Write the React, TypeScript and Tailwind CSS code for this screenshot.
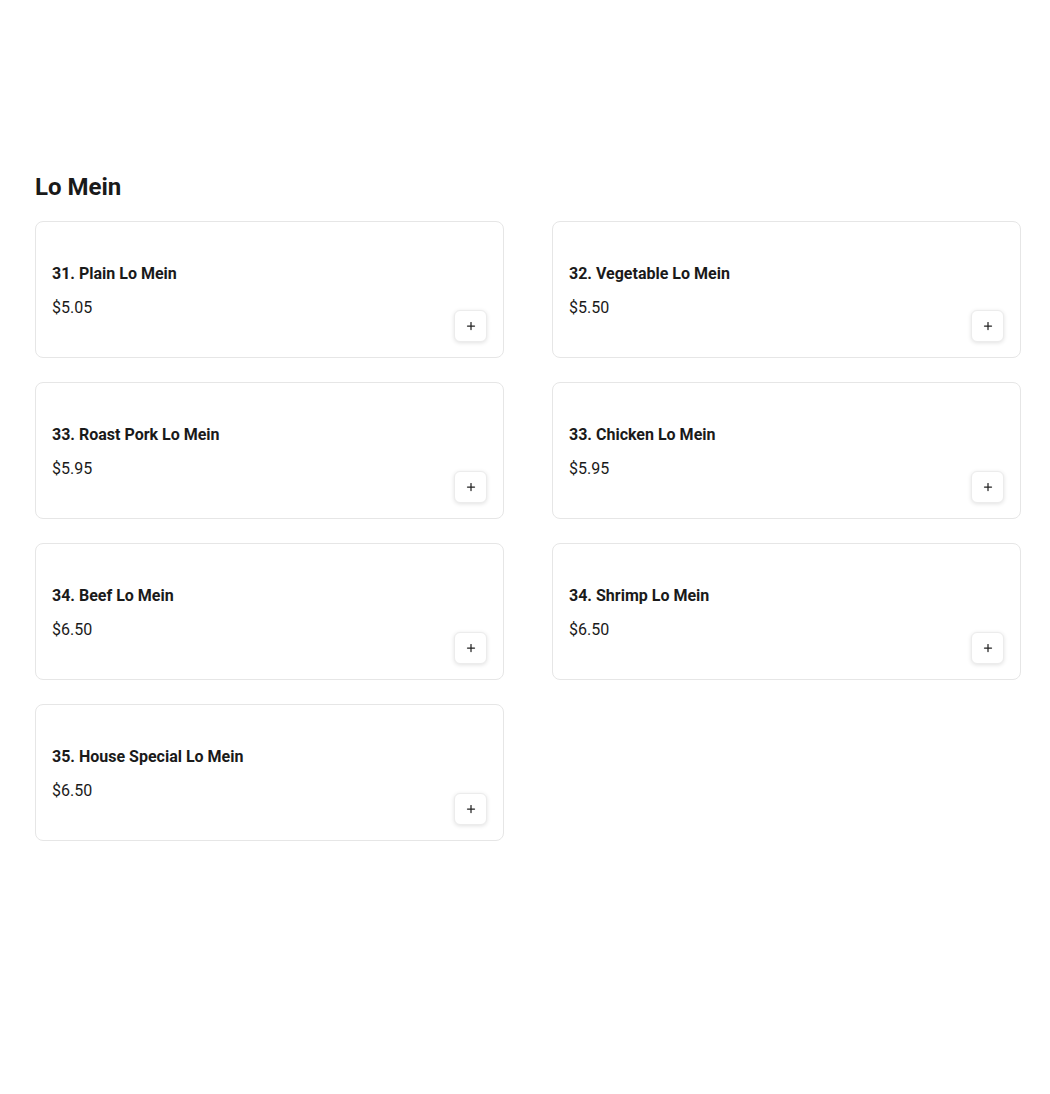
import { Plus } from 'lucide-react'

interface Item {
  name: string
  price: string
}

const items: Item[] = [
  { name: '31. Plain Lo Mein', price: '$5.05' },
  { name: '32. Vegetable Lo Mein', price: '$5.50' },
  { name: '33. Roast Pork Lo Mein', price: '$5.95' },
  { name: '33. Chicken Lo Mein', price: '$5.95' },
  { name: '34. Beef Lo Mein', price: '$6.50' },
  { name: '34. Shrimp Lo Mein', price: '$6.50' },
  { name: '35. House Special Lo Mein', price: '$6.50' },
]

export default function App() {
  return (
    <div className="min-h-screen bg-white font-['Roboto',sans-serif] text-[#1a1a1a]">
      <div className="ml-[35px] w-[986px] pt-[171px] pb-16">
        <h2 className="text-2xl font-bold leading-8">Lo Mein</h2>
        <div className="mt-[18px] grid grid-cols-2 gap-x-12 gap-y-6">
          {items.map((item) => (
            <MenuCard key={item.name} item={item} />
          ))}
        </div>
      </div>
    </div>
  )
}

function MenuCard({ item }: { item: Item }) {
  return (
    <div className="flex h-[137px] items-end justify-between rounded-lg border border-[#e6e6e6] bg-white pl-4 pr-4 pb-[15px]">
      <div className="flex h-full flex-col pt-[40px]">
        <div className="text-base font-bold leading-6">{item.name}</div>
        <div className="mt-[10px] text-base leading-6">{item.price}</div>
      </div>
      <button className="flex h-8 w-[33px] items-center justify-center rounded-md border border-[#ececec] bg-white shadow-[0_1px_4px_rgba(0,0,0,0.12)]">
        <Plus size={12} strokeWidth={2.5} className="text-[#222]" />
      </button>
    </div>
  )
}
